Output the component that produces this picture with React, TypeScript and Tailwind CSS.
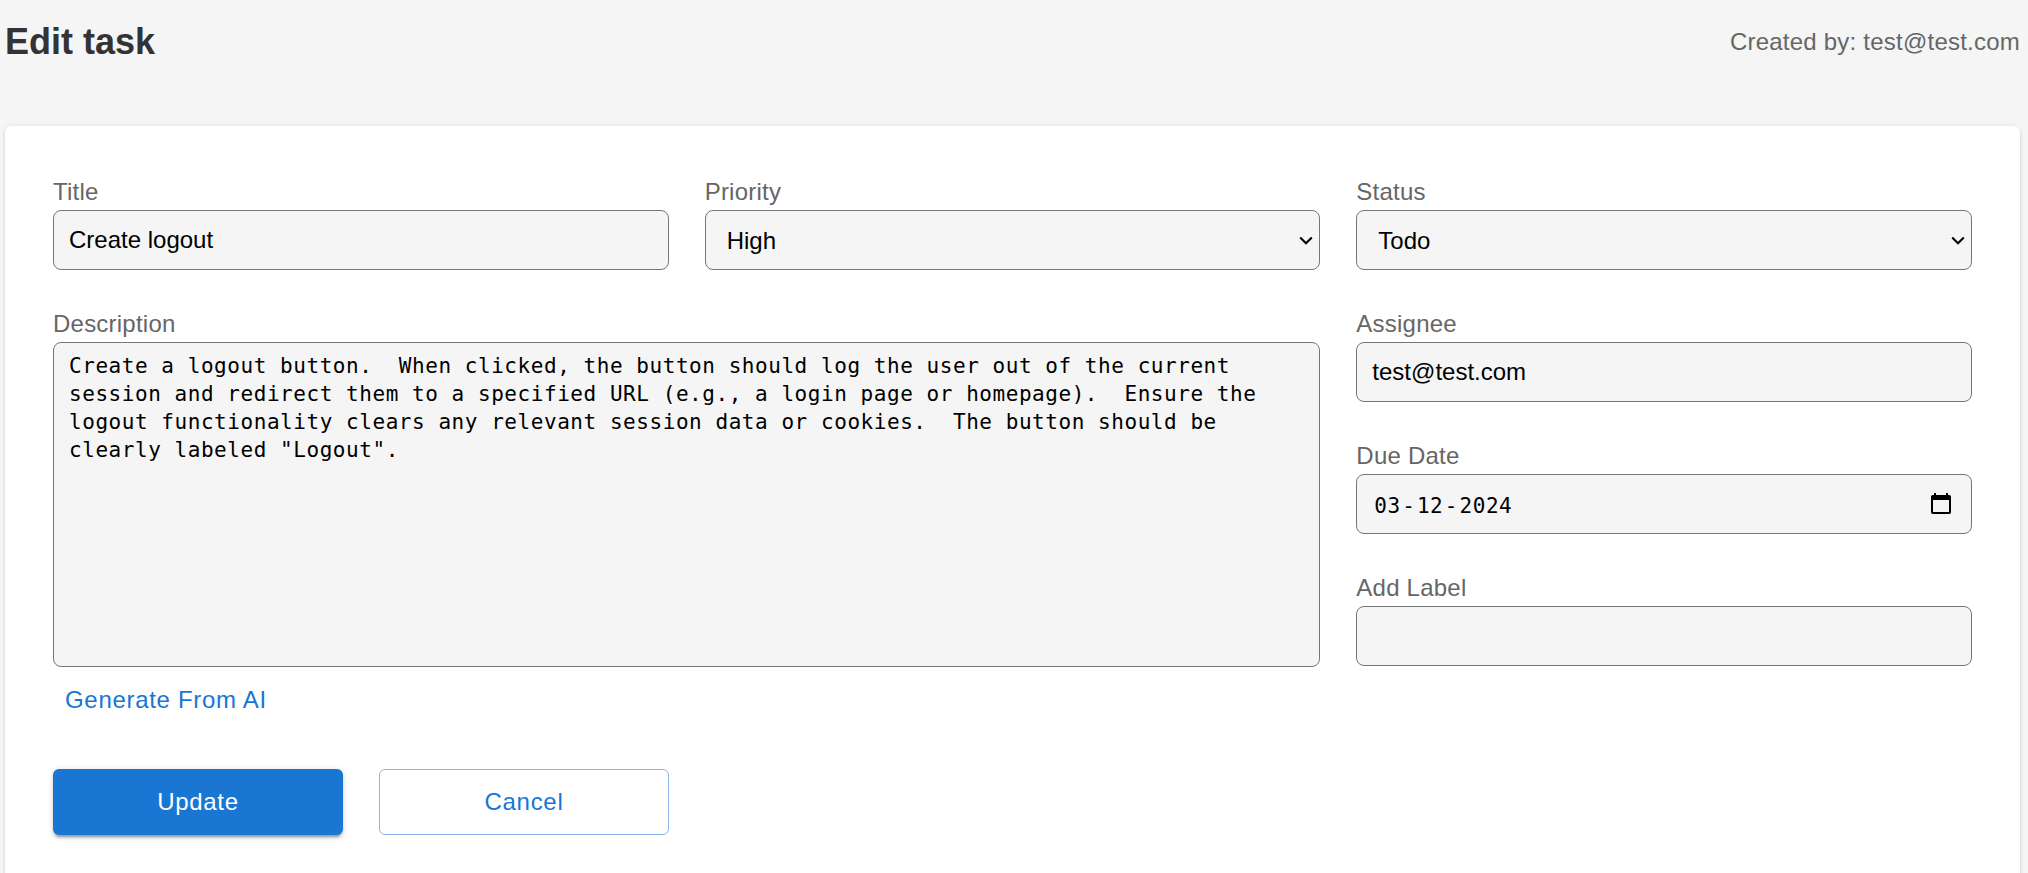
import React from "react";

const box =
  "block w-full h-[60px] rounded-[8px] border border-[#767676] bg-[#f5f5f5] text-[24px] leading-[28px] text-black outline-none";

function Field({ label, children }: { label: string; children: React.ReactNode }) {
  return (
    <label className="block">
      <span className="block h-[32px] text-[24px] leading-[27px] tracking-[0.225px] text-[#666]">{label}</span>
      {children}
    </label>
  );
}

function Select({ options }: { options: string[] }) {
  return (
    <span className="relative block">
      <select className={`${box} appearance-none pl-[21px] pr-10 pt-[2px]`} defaultValue={options[0]}>
        {options.map((o) => (
          <option key={o}>{o}</option>
        ))}
      </select>
      <svg
        className="pointer-events-none absolute right-[7px] top-[26px]"
        width="14"
        height="10"
        viewBox="0 0 14 10"
        fill="none"
        stroke="#000"
        strokeWidth="2.1"
      >
        <path d="M1.2 1.4 L7 7.2 L12.8 1.4" />
      </svg>
    </span>
  );
}

function DateBox() {
  return (
    <div
      className={`${box} flex! items-center justify-between pl-[17px] pr-[20px] font-['DejaVu_Sans_Mono',monospace] text-[21px]! tracking-[0.55px]`}
    >
      <span className="flex pt-[3px]">
        <span>03</span>
        <span className="px-[1.5px]">-</span>
        <span>12</span>
        <span className="px-[1.5px]">-</span>
        <span>2024</span>
      </span>
      <svg className="mb-[1px]" width="20" height="22" viewBox="0 0 20 22" fill="none">
        <path
          fill="#000"
          fillRule="evenodd"
          d="M3 0h2v2h10V0h2v2h1.2A1.8 1.8 0 0 1 20 3.8v15.4a1.8 1.8 0 0 1-1.8 1.8H1.8A1.8 1.8 0 0 1 0 19.2V3.8A1.8 1.8 0 0 1 1.8 2H3V0ZM2 7v12h16V7H2Z"
        />
      </svg>
    </div>
  );
}

const description =
  'Create a logout button.  When clicked, the button should log the user out of the current session and redirect them to a specified URL (e.g., a login page or homepage).  Ensure the logout functionality clears any relevant session data or cookies.  The button should be clearly labeled "Logout".';

export default function App() {
  return (
    <div className="h-[873px] overflow-hidden bg-[#f5f5f5] pl-[5px] pr-[8px] font-['Liberation_Sans',Arial,sans-serif]">
      <header className="flex h-[126px] items-start justify-between pt-[21px]">
        <h1 className="text-[36px] font-bold leading-[41px] text-[#333]">Edit task</h1>
        <p className="pt-[7px] text-[24px] leading-[28px] tracking-[0.225px] text-[#666]">
          Created by: test@test.com
        </p>
      </header>
      <main className="h-[800px] rounded-[6px] bg-white px-[48px] pt-[52px] shadow-[0_3px_1px_-2px_rgba(0,0,0,0.1),0_2px_2px_0_rgba(0,0,0,0.08),0_1px_5px_0_rgba(0,0,0,0.12)]">
        <div className="grid grid-cols-3 gap-x-[36px] gap-y-[40px]">
          <Field label="Title">
            <input className={`${box} px-[15px]`} defaultValue="Create logout" />
          </Field>
          <Field label="Priority">
            <Select options={["High", "Medium", "Low"]} />
          </Field>
          <Field label="Status">
            <Select options={["Todo", "In progress", "Done"]} />
          </Field>
          <div className="col-span-2">
            <Field label="Description">
              <textarea
                className={`${box} h-[325px]! resize-none overflow-hidden px-[15px] py-[9px] font-['DejaVu_Sans_Mono',monospace] text-[21px]! tracking-[0.55px]`}
                defaultValue={description}
                spellCheck={false}
              />
            </Field>
            <button className="ml-[12px] mt-[19px] block text-[24px] leading-[28px] tracking-[0.69px] text-[#1976d2]">
              Generate From AI
            </button>
          </div>
          <div className="flex flex-col gap-[40px]">
            <Field label="Assignee">
              <input className={`${box} px-[15px]`} defaultValue="test@test.com" />
            </Field>
            <Field label="Due Date">
              <DateBox />
            </Field>
            <Field label="Add Label">
              <input className={`${box} px-[15px]`} />
            </Field>
          </div>
        </div>
        <div className="mt-[55px] flex gap-[36px] text-[24px] leading-[28px] tracking-[0.69px]">
          <button className="h-[66px] w-[290px] rounded-[6px] bg-[#1976d2] text-white shadow-[0_4.5px_1.5px_-3px_rgba(0,0,0,0.2),0_3px_3px_0_rgba(0,0,0,0.14),0_1.5px_7.5px_0_rgba(0,0,0,0.12)]">
            Update
          </button>
          <button className="h-[66px] w-[290px] rounded-[6px] border border-[#1976d2]/50 text-[#1976d2]">
            Cancel
          </button>
        </div>
      </main>
    </div>
  );
}
